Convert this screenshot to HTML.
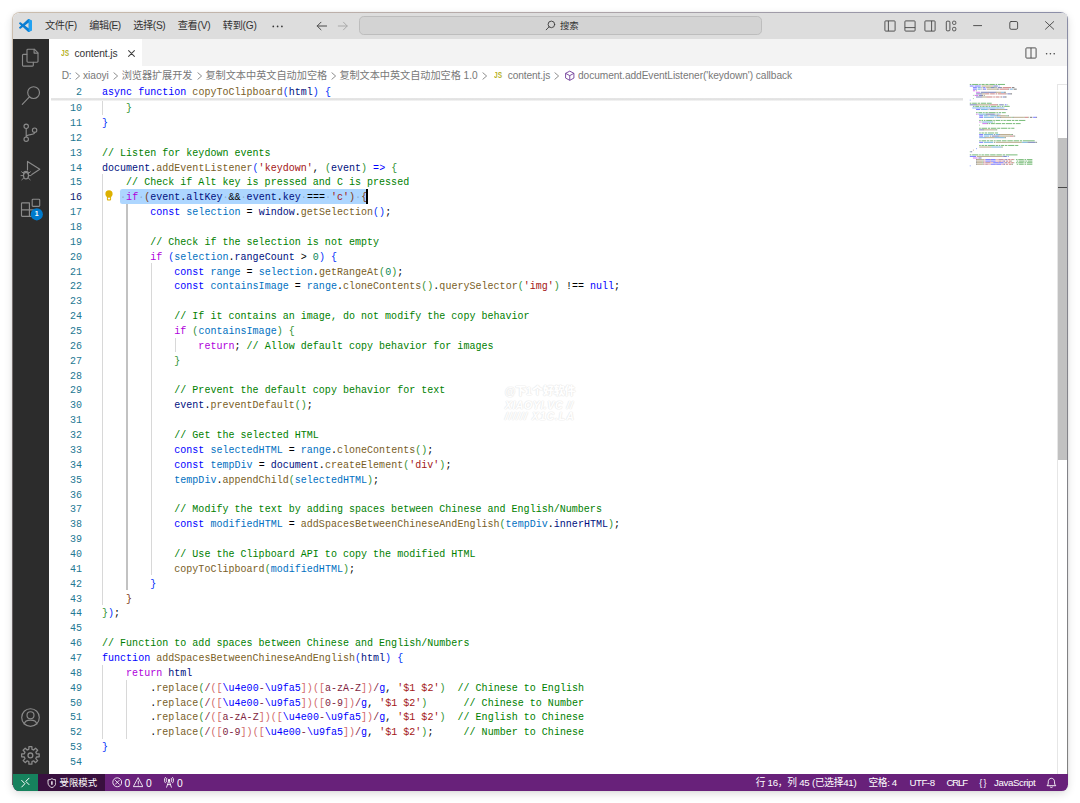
<!DOCTYPE html><html lang="zh-CN"><head><meta charset="utf-8"><title>content.js - Visual Studio Code</title>
<style>

html,body{margin:0;padding:0;background:#fff;}
body{width:1080px;height:803px;overflow:hidden;position:relative;font-family:"Liberation Sans","Noto Sans CJK SC",sans-serif;}
.win{position:absolute;left:12.8px;top:13px;width:1055.3px;height:777.9px;border-radius:6.4px;overflow:hidden;background:#fff;}
.shadow{position:absolute;left:11.6px;top:11.5px;width:1056.8px;height:779.4px;border-radius:7.6px;background:linear-gradient(90deg,#cbbdad 0%,#b5a9a8 45%,#8b8ea8 100%);box-shadow:0 3px 9px rgba(0,0,0,.13),0 0 3px rgba(0,0,0,.08);}
.pg{position:absolute;left:-12.8px;top:-13px;width:1080px;height:803px;}
.pg div,.pg span,.pg svg{position:absolute;}
.t{white-space:pre;}
.t span{position:static !important;}
.code,.ln{transform:rotate(.001deg);}
.code{font-family:"Liberation Mono","DejaVu Sans Mono",monospace;font-size:10px;letter-spacing:0.022px;white-space:pre;color:#000;height:14.864px;line-height:14.864px;}
.code span{position:static !important;}
.ln{font-family:"Liberation Mono","DejaVu Sans Mono",monospace;font-size:10px;letter-spacing:0.022px;color:#237893;text-align:right;width:40px;height:14.864px;line-height:14.864px;}
.g{width:.9px;background:#d8d8d8;}
.ga{width:1.7px;background:#c2c2c2;}
.ws{color:rgba(51,51,51,.28);}

</style></head><body>
<div class="shadow"></div>
<div style="position:absolute;left:11.6px;top:40px;width:1.4px;height:745px;background:linear-gradient(#cbbdad 0,#c5b7a8 10%,#77706f 30%,#5e585c 100%)"></div>
<div class="win"><div class="pg">
<div style="left:12px;top:12px;width:1057px;height:26.9px;background:#dddddd"></div>
<svg style="left:19.2px;top:18.9px" width="13" height="13" viewBox="0 0 100 100"><path fill="#0b7ed3" fill-rule="evenodd" d="M70.9119 99.3171C72.4869 99.9307 74.2828 99.8914 75.8725 99.1264L96.4608 89.2197C98.6242 88.1787 100 85.9892 100 83.5872V16.4133C100 14.0113 98.6243 11.8218 96.4609 10.7808L75.8725 0.873756C73.7862 -0.130129 71.3446 0.11576 69.5135 1.44695C69.252 1.63711 69.0028 1.84943 68.769 2.08341L29.3551 38.0415L12.1872 25.0096C10.589 23.7965 8.35363 23.8959 6.86933 25.2461L1.36303 30.2549C-0.452552 31.9064 -0.454633 34.7627 1.35853 36.417L16.2471 50.0001L1.35853 63.5832C-0.454633 65.2374 -0.452552 68.0938 1.36303 69.7453L6.86933 74.7541C8.35363 76.1043 10.589 76.2037 12.1872 74.9905L29.3551 61.9587L68.769 97.9167C69.3925 98.5406 70.1246 99.0104 70.9119 99.3171ZM75.0152 27.2989L45.1091 50.0001L75.0152 72.7012V27.2989Z"/><path fill="#22a2f2" d="M75 .6L96.46 10.78C98.62 11.82 100 14 100 16.41V83.59C100 85.99 98.62 88.18 96.46 89.22L75 99.4C73.4 100.1 71.6 99.7 70.9 99.3C73.4 100 75 98 75 95.6V4.4C75 2 73.4 0 70.9 .7C71.6 .3 73.4 -.1 75 .6Z"/></svg>
<span class="t" id="m1" style="left:45.00px;top:18.20px;height:16px;line-height:16px;font-size:10.17px;color:#333333;letter-spacing:-0.316px;">文件(F)</span>
<span class="t" id="m2" style="left:89.30px;top:18.20px;height:16px;line-height:16px;font-size:10.17px;color:#333333;letter-spacing:-0.492px;">编辑(E)</span>
<span class="t" id="m3" style="left:133.30px;top:18.20px;height:16px;line-height:16px;font-size:10.17px;color:#333333;letter-spacing:-0.372px;">选择(S)</span>
<span class="t" id="m4" style="left:177.70px;top:18.20px;height:16px;line-height:16px;font-size:10.17px;color:#333333;letter-spacing:-0.252px;">查看(V)</span>
<span class="t" id="m5" style="left:222.70px;top:18.20px;height:16px;line-height:16px;font-size:10.17px;color:#333333;letter-spacing:-0.197px;">转到(G)</span>
<svg style="left:272.4px;top:24.6px" width="12" height="3" viewBox="0 0 12 3" fill="#333"><circle cx="1.3" cy="1.4" r=".85"/><circle cx="5.6" cy="1.4" r=".85"/><circle cx="9.9" cy="1.4" r=".85"/></svg>
<svg style="left:316px;top:20px" width="34" height="12" viewBox="0 0 34 12" fill="none" stroke-linecap="round" stroke-linejoin="round"><path d="M10.6 6H1.2M5 2.2L1.2 6L5 9.8" stroke="#4a4a4a" stroke-width="1"/><path d="M22.3 6H31.2M27.5 2.2L31.2 6L27.5 9.8" stroke="#a9a9a9" stroke-width="1"/></svg>
<div style="left:359.1px;top:16.2px;width:400.9px;height:16.8px;border-radius:4.7px;background:#d3d3d3;border:.8px solid #bdbdbd;box-sizing:content-box"></div>
<svg style="left:545.4px;top:20.4px" width="11" height="11" viewBox="0 0 11 11" fill="none" stroke="#3b3b3b" stroke-width=".9" stroke-linecap="round"><circle cx="6.4" cy="4.4" r="3.3"/><path d="M4.1 6.8L1.2 9.8"/></svg>
<span class="t" id="cc" style="left:560.00px;top:17.90px;height:16px;line-height:16px;font-size:9.40px;color:#333;letter-spacing:-0.183px;">搜索</span>
<svg style="left:883.5px;top:19.5px" width="74" height="12" viewBox="0 0 74 12" fill="none" stroke="#454545" stroke-width=".9"><rect x=".9" y=".9" width="10.2" height="10.2" rx=".8"/><path d="M4.4 .9V11.1"/><rect x="20.9" y=".9" width="10.2" height="10.2" rx=".8"/><path d="M20.9 7.6H31.1"/><rect x="40.9" y=".9" width="10.2" height="10.2" rx=".8"/><path d="M47.6 .9V11.1"/><rect x="62.3" y="1.2" width="3.6" height="9.6" rx=".9"/><rect x="68.6" y="1.2" width="3.2" height="3.2" rx="1"/><rect x="68.6" y="7.4" width="3.2" height="3.4" rx="1"/></svg>
<svg style="left:970px;top:18px" width="90" height="16" viewBox="0 0 90 16" fill="none" stroke="#3a3a3a" stroke-width=".85" stroke-linecap="round"><path d="M3.6 7.6H11.6"/><rect x="39.8" y="3.5" width="7.8" height="7.8" rx="1.4"/><path d="M75.5 3.6L83.7 11.2M83.7 3.6L75.5 11.2"/></svg>
<div style="left:12px;top:38.9px;width:37.3px;height:735px;background:#2c2c2c"></div>
<svg style="left:0;top:0" width="60" height="803" viewBox="0 0 60 803" fill="none" stroke="#8a8a8a" stroke-width="1.15" stroke-linejoin="round" stroke-linecap="round"><path d="M27.9 49.2H34.3L38 52.9V61.3A.9 .9 0 0 1 37.1 62.2H27.9A.9 .9 0 0 1 27 61.3V50.1A.9 .9 0 0 1 27.9 49.2Z"/><path d="M34.1 49.4V53.1H37.8"/><path d="M26.8 54.3H23.4A.9 .9 0 0 0 22.5 55.2V65.2A.9 .9 0 0 0 23.4 66.1H32.4A.9 .9 0 0 0 33.3 65.2V62.4"/><circle cx="33.6" cy="92.6" r="5.9"/><path d="M29.4 96.9L22.3 104.4"/><circle cx="26.2" cy="126.3" r="2.2"/><circle cx="26.2" cy="139.2" r="2.2"/><circle cx="34.6" cy="130.2" r="2.2"/><path d="M26.2 128.5V137M34.6 132.4C34.6 135.6 26.2 133.6 26.2 137"/><path d="M27.5 170V161.4L39.8 169.2L31.8 174.6"/><ellipse cx="26" cy="175.6" rx="2.5" ry="3.3"/><path d="M23.6 172.6C24 171 28 171 28.4 172.6" /><path d="M23.5 175.6H21M28.5 175.6H31M23.8 173.6L21.6 171.8M28.2 173.6L30.4 171.8M23.9 177.8L21.8 179.8M28.1 177.8L30.2 179.8" stroke-width="1"/><path d="M29.4 202.8H22.2A.7 .7 0 0 0 21.5 203.5V215.6A.7 .7 0 0 0 22.2 216.3H35.5A.7 .7 0 0 0 36.2 215.6V209.8H29.4ZM21.5 209.8H29.4V216.3"/><rect x="32.2" y="199.2" width="7.5" height="7.2" rx=".8"/><circle cx="36.8" cy="214.3" r="6.1" fill="#007acc" stroke="none"/><circle cx="30.5" cy="717.5" r="8.8"/><circle cx="30.5" cy="715.2" r="3.5"/><path d="M24.2 724C25.2 718.8 35.8 718.8 36.8 724"/><path d="M28.82 749.30 L28.93 746.62 L31.87 746.62 L31.98 749.30 L33.60 749.97 L35.57 748.15 L37.65 750.23 L35.83 752.20 L36.50 753.82 L39.18 753.93 L39.18 756.87 L36.50 756.98 L35.83 758.60 L37.65 760.57 L35.57 762.65 L33.60 760.83 L31.98 761.50 L31.87 764.18 L28.93 764.18 L28.82 761.50 L27.20 760.83 L25.23 762.65 L23.15 760.57 L24.97 758.60 L24.30 756.98 L21.62 756.87 L21.62 753.93 L24.30 753.82 L24.97 752.20 L23.15 750.23 L25.23 748.15 L27.20 749.97Z" stroke-width="1.3"/><circle cx="30.4" cy="755.4" r="2.4" stroke-width="1.3"/></svg><span class="t" style="left:34.6px;top:209.4px;width:4.4px;text-align:center;font-size:7px;line-height:10px;height:10px;font-weight:bold;color:#fff">1</span>
<div style="left:49.3px;top:38.9px;width:1019.7px;height:27.5px;background:#f3f3f3"></div>
<div style="left:49.3px;top:38.9px;width:92.7px;height:27.5px;background:#ffffff"></div>
<span class="t" style="left:60.90px;top:46.60px;height:12px;line-height:12px;font-size:8.6px;font-weight:bold;color:#b7b227;transform:scaleX(.76);transform-origin:0 50%">JS</span>
<span class="t" id="tabn" style="left:74.60px;top:46.40px;height:16px;line-height:16px;font-size:10.17px;color:#333333;letter-spacing:-0.048px;">content.js</span>
<svg style="left:126.7px;top:49.1px" width="9" height="9" viewBox="0 0 9 9" fill="none" stroke="#424242" stroke-width="1.05" stroke-linecap="round"><path d="M1.6 1.6L7.4 7.4M7.4 1.6L1.6 7.4"/></svg>
<svg style="left:1024.6px;top:47px" width="12" height="12" viewBox="0 0 12 12" fill="none" stroke="#424242" stroke-width=".9"><rect x=".9" y=".9" width="10.2" height="10.2" rx=".8"/><path d="M6 .9V11.1"/></svg>
<svg style="left:1045px;top:51.5px" width="12" height="4" viewBox="0 0 12 4" fill="#424242"><circle cx="1.6" cy="1.8" r=".8"/><circle cx="5.4" cy="1.8" r=".8"/><circle cx="9.2" cy="1.8" r=".8"/></svg>
<span class="t" id="b1" style="left:61.70px;top:68.00px;height:16px;line-height:16px;font-size:10.17px;color:#787878;letter-spacing:-0.278px;">D:</span>
<svg style="left:75.4px;top:71.5px" width="6" height="8" viewBox="0 0 6 8" fill="none" stroke="#7a7a7a" stroke-width=".85" stroke-linecap="round" stroke-linejoin="round"><path d="M.9 .8L4.6 4L.9 7.2"/></svg>
<span class="t" id="b2" style="left:83.10px;top:68.00px;height:16px;line-height:16px;font-size:10.17px;color:#787878;letter-spacing:-0.061px;">xiaoyi</span>
<svg style="left:112.6px;top:71.5px" width="6" height="8" viewBox="0 0 6 8" fill="none" stroke="#7a7a7a" stroke-width=".85" stroke-linecap="round" stroke-linejoin="round"><path d="M.9 .8L4.6 4L.9 7.2"/></svg>
<span class="t" id="b3" style="left:121.70px;top:68.00px;height:16px;line-height:16px;font-size:10.17px;color:#787878;letter-spacing:-0.056px;">浏览器扩展开发</span>
<svg style="left:196.8px;top:71.5px" width="6" height="8" viewBox="0 0 6 8" fill="none" stroke="#7a7a7a" stroke-width=".85" stroke-linecap="round" stroke-linejoin="round"><path d="M.9 .8L4.6 4L.9 7.2"/></svg>
<span class="t" id="b4" style="left:205.40px;top:68.00px;height:16px;line-height:16px;font-size:10.17px;color:#787878;letter-spacing:-0.006px;">复制文本中英文自动加空格</span>
<svg style="left:331.0px;top:71.5px" width="6" height="8" viewBox="0 0 6 8" fill="none" stroke="#7a7a7a" stroke-width=".85" stroke-linecap="round" stroke-linejoin="round"><path d="M.9 .8L4.6 4L.9 7.2"/></svg>
<span class="t" id="b5" style="left:339.40px;top:68.00px;height:16px;line-height:16px;font-size:10.17px;color:#787878;letter-spacing:-0.039px;">复制文本中英文自动加空格 1.0</span>
<svg style="left:481.6px;top:71.5px" width="6" height="8" viewBox="0 0 6 8" fill="none" stroke="#7a7a7a" stroke-width=".85" stroke-linecap="round" stroke-linejoin="round"><path d="M.9 .8L4.6 4L.9 7.2"/></svg>
<span class="t" style="left:494.00px;top:68.80px;height:12px;line-height:12px;font-size:8.6px;font-weight:bold;color:#b7b227;transform:scaleX(.76);transform-origin:0 50%">JS</span>
<span class="t" id="b6" style="left:507.70px;top:68.00px;height:16px;line-height:16px;font-size:10.17px;color:#787878;letter-spacing:-0.098px;">content.js</span>
<svg style="left:554.2px;top:71.5px" width="6" height="8" viewBox="0 0 6 8" fill="none" stroke="#7a7a7a" stroke-width=".85" stroke-linecap="round" stroke-linejoin="round"><path d="M.9 .8L4.6 4L.9 7.2"/></svg>
<svg style="left:563.6px;top:70.1px" width="11.5" height="11.5" viewBox="0 0 16 16" fill="none" stroke="#652d90" stroke-width="1.15" stroke-linejoin="round"><path d="M8 1.6L13.8 4.6V11.2L8 14.4L2.2 11.2V4.6Z"/><path d="M2.4 4.8L8 7.8L13.6 4.8M8 7.8V14.2"/></svg>
<span class="t" id="b7" style="left:578.00px;top:68.00px;height:16px;line-height:16px;font-size:10.17px;color:#787878;letter-spacing:-0.060px;">document.addEventListener('keydown') callback</span>
<div style="left:120.47px;top:189.00px;width:246.90px;height:14.86px;background:#add6ff;border-radius:2.3px"></div>
<div class="g" style="left:102.40px;top:99.81px;height:14.86px"></div>
<div class="g" style="left:102.40px;top:174.13px;height:431.06px"></div>
<div class="ga" style="left:126.19px;top:203.86px;height:386.46px"></div>
<div class="g" style="left:150.58px;top:263.32px;height:312.14px"></div>
<div class="g" style="left:174.66px;top:337.64px;height:14.86px"></div>
<div class="g" style="left:102.40px;top:664.65px;height:74.32px"></div>
<div class="g" style="left:126.49px;top:679.51px;height:59.46px"></div>
<div class="ln" style="left:42.20px;top:86.30px;color:#237893">2</div>
<div class="code" style="left:102.40px;top:86.30px"><span style="color:#0000ff">async</span> <span style="color:#0000ff">function</span> <span style="color:#795e26">copyToClipboard</span><span style="color:#0431fa">(</span><span style="color:#001080">html</span><span style="color:#0431fa">)</span> <span style="color:#0431fa">{</span></div>
<div class="ln" style="left:42.20px;top:102.06px;color:#237893">10</div>
<div class="code" style="left:102.40px;top:102.06px">    <span style="color:#319331">}</span></div>
<div class="ln" style="left:42.20px;top:116.93px;color:#237893">11</div>
<div class="code" style="left:102.40px;top:116.93px"><span style="color:#0431fa">}</span></div>
<div class="ln" style="left:42.20px;top:131.79px;color:#237893">12</div>
<div class="ln" style="left:42.20px;top:146.66px;color:#237893">13</div>
<div class="code" style="left:102.40px;top:146.66px"><span style="color:#008000">// Listen for keydown events</span></div>
<div class="ln" style="left:42.20px;top:161.52px;color:#237893">14</div>
<div class="code" style="left:102.40px;top:161.52px"><span style="color:#001080">document</span>.<span style="color:#795e26">addEventListener</span><span style="color:#0431fa">(</span><span style="color:#a31515">'keydown'</span>, <span style="color:#319331">(</span><span style="color:#001080">event</span><span style="color:#319331">)</span> <span style="color:#0000ff">=&gt;</span> <span style="color:#319331">{</span></div>
<div class="ln" style="left:42.20px;top:176.38px;color:#237893">15</div>
<div class="code" style="left:102.40px;top:176.38px">    <span style="color:#008000">// Check if Alt key is pressed and C is pressed</span></div>
<div class="ln" style="left:42.20px;top:191.25px;color:#0b216f">16</div>
<div class="code" style="left:102.40px;top:191.25px">   <span class="ws">·</span><span style="color:#af00db">if</span><span class="ws">·</span><span style="color:#7b3814">(</span><span style="color:#001080">event</span>.<span style="color:#001080">altKey</span><span class="ws">·</span>&amp;&amp;<span class="ws">·</span><span style="color:#001080">event</span>.<span style="color:#001080">key</span><span class="ws">·</span>===<span class="ws">·</span><span style="color:#a31515">'c'</span><span style="color:#7b3814">)</span><span class="ws">·</span><span style="color:#7b3814">{</span></div>
<div class="ln" style="left:42.20px;top:206.11px;color:#237893">17</div>
<div class="code" style="left:102.40px;top:206.11px">        <span style="color:#0000ff">const</span> <span style="color:#0070c1">selection</span> = <span style="color:#001080">window</span>.<span style="color:#795e26">getSelection</span><span style="color:#0431fa">()</span>;</div>
<div class="ln" style="left:42.20px;top:220.98px;color:#237893">18</div>
<div class="ln" style="left:42.20px;top:235.84px;color:#237893">19</div>
<div class="code" style="left:102.40px;top:235.84px">        <span style="color:#008000">// Check if the selection is not empty</span></div>
<div class="ln" style="left:42.20px;top:250.70px;color:#237893">20</div>
<div class="code" style="left:102.40px;top:250.70px">        <span style="color:#af00db">if</span> <span style="color:#0431fa">(</span><span style="color:#0070c1">selection</span>.<span style="color:#001080">rangeCount</span> &gt; <span style="color:#098658">0</span><span style="color:#0431fa">)</span> <span style="color:#0431fa">{</span></div>
<div class="ln" style="left:42.20px;top:265.57px;color:#237893">21</div>
<div class="code" style="left:102.40px;top:265.57px">            <span style="color:#0000ff">const</span> <span style="color:#0070c1">range</span> = <span style="color:#0070c1">selection</span>.<span style="color:#795e26">getRangeAt</span><span style="color:#319331">(</span><span style="color:#098658">0</span><span style="color:#319331">)</span>;</div>
<div class="ln" style="left:42.20px;top:280.43px;color:#237893">22</div>
<div class="code" style="left:102.40px;top:280.43px">            <span style="color:#0000ff">const</span> <span style="color:#0070c1">containsImage</span> = <span style="color:#0070c1">range</span>.<span style="color:#795e26">cloneContents</span><span style="color:#319331">()</span>.<span style="color:#795e26">querySelector</span><span style="color:#319331">(</span><span style="color:#a31515">'img'</span><span style="color:#319331">)</span> !== <span style="color:#0000ff">null</span>;</div>
<div class="ln" style="left:42.20px;top:295.30px;color:#237893">23</div>
<div class="ln" style="left:42.20px;top:310.16px;color:#237893">24</div>
<div class="code" style="left:102.40px;top:310.16px">            <span style="color:#008000">// If it contains an image, do not modify the copy behavior</span></div>
<div class="ln" style="left:42.20px;top:325.02px;color:#237893">25</div>
<div class="code" style="left:102.40px;top:325.02px">            <span style="color:#af00db">if</span> <span style="color:#319331">(</span><span style="color:#0070c1">containsImage</span><span style="color:#319331">)</span> <span style="color:#319331">{</span></div>
<div class="ln" style="left:42.20px;top:339.89px;color:#237893">26</div>
<div class="code" style="left:102.40px;top:339.89px">                <span style="color:#af00db">return</span>; <span style="color:#008000">// Allow default copy behavior for images</span></div>
<div class="ln" style="left:42.20px;top:354.75px;color:#237893">27</div>
<div class="code" style="left:102.40px;top:354.75px">            <span style="color:#319331">}</span></div>
<div class="ln" style="left:42.20px;top:369.62px;color:#237893">28</div>
<div class="ln" style="left:42.20px;top:384.48px;color:#237893">29</div>
<div class="code" style="left:102.40px;top:384.48px">            <span style="color:#008000">// Prevent the default copy behavior for text</span></div>
<div class="ln" style="left:42.20px;top:399.34px;color:#237893">30</div>
<div class="code" style="left:102.40px;top:399.34px">            <span style="color:#001080">event</span>.<span style="color:#795e26">preventDefault</span><span style="color:#319331">()</span>;</div>
<div class="ln" style="left:42.20px;top:414.21px;color:#237893">31</div>
<div class="ln" style="left:42.20px;top:429.07px;color:#237893">32</div>
<div class="code" style="left:102.40px;top:429.07px">            <span style="color:#008000">// Get the selected HTML</span></div>
<div class="ln" style="left:42.20px;top:443.94px;color:#237893">33</div>
<div class="code" style="left:102.40px;top:443.94px">            <span style="color:#0000ff">const</span> <span style="color:#0070c1">selectedHTML</span> = <span style="color:#0070c1">range</span>.<span style="color:#795e26">cloneContents</span><span style="color:#319331">()</span>;</div>
<div class="ln" style="left:42.20px;top:458.80px;color:#237893">34</div>
<div class="code" style="left:102.40px;top:458.80px">            <span style="color:#0000ff">const</span> <span style="color:#0070c1">tempDiv</span> = <span style="color:#001080">document</span>.<span style="color:#795e26">createElement</span><span style="color:#319331">(</span><span style="color:#a31515">'div'</span><span style="color:#319331">)</span>;</div>
<div class="ln" style="left:42.20px;top:473.66px;color:#237893">35</div>
<div class="code" style="left:102.40px;top:473.66px">            <span style="color:#0070c1">tempDiv</span>.<span style="color:#795e26">appendChild</span><span style="color:#319331">(</span><span style="color:#0070c1">selectedHTML</span><span style="color:#319331">)</span>;</div>
<div class="ln" style="left:42.20px;top:488.53px;color:#237893">36</div>
<div class="ln" style="left:42.20px;top:503.39px;color:#237893">37</div>
<div class="code" style="left:102.40px;top:503.39px">            <span style="color:#008000">// Modify the text by adding spaces between Chinese and English/Numbers</span></div>
<div class="ln" style="left:42.20px;top:518.26px;color:#237893">38</div>
<div class="code" style="left:102.40px;top:518.26px">            <span style="color:#0000ff">const</span> <span style="color:#0070c1">modifiedHTML</span> = <span style="color:#795e26">addSpacesBetweenChineseAndEnglish</span><span style="color:#319331">(</span><span style="color:#0070c1">tempDiv</span>.<span style="color:#001080">innerHTML</span><span style="color:#319331">)</span>;</div>
<div class="ln" style="left:42.20px;top:533.12px;color:#237893">39</div>
<div class="ln" style="left:42.20px;top:547.98px;color:#237893">40</div>
<div class="code" style="left:102.40px;top:547.98px">            <span style="color:#008000">// Use the Clipboard API to copy the modified HTML</span></div>
<div class="ln" style="left:42.20px;top:562.85px;color:#237893">41</div>
<div class="code" style="left:102.40px;top:562.85px">            <span style="color:#795e26">copyToClipboard</span><span style="color:#319331">(</span><span style="color:#0070c1">modifiedHTML</span><span style="color:#319331">)</span>;</div>
<div class="ln" style="left:42.20px;top:577.71px;color:#237893">42</div>
<div class="code" style="left:102.40px;top:577.71px">        <span style="color:#0431fa">}</span></div>
<div class="ln" style="left:42.20px;top:592.58px;color:#237893">43</div>
<div class="code" style="left:102.40px;top:592.58px">    <span style="color:#7b3814">}</span></div>
<div class="ln" style="left:42.20px;top:607.44px;color:#237893">44</div>
<div class="code" style="left:102.40px;top:607.44px"><span style="color:#319331">}</span><span style="color:#0431fa">)</span>;</div>
<div class="ln" style="left:42.20px;top:622.30px;color:#237893">45</div>
<div class="ln" style="left:42.20px;top:637.17px;color:#237893">46</div>
<div class="code" style="left:102.40px;top:637.17px"><span style="color:#008000">// Function to add spaces between Chinese and English/Numbers</span></div>
<div class="ln" style="left:42.20px;top:652.03px;color:#237893">47</div>
<div class="code" style="left:102.40px;top:652.03px"><span style="color:#0000ff">function</span> <span style="color:#795e26">addSpacesBetweenChineseAndEnglish</span><span style="color:#0431fa">(</span><span style="color:#001080">html</span><span style="color:#0431fa">)</span> <span style="color:#0431fa">{</span></div>
<div class="ln" style="left:42.20px;top:666.90px;color:#237893">48</div>
<div class="code" style="left:102.40px;top:666.90px">    <span style="color:#af00db">return</span> <span style="color:#001080">html</span></div>
<div class="ln" style="left:42.20px;top:681.76px;color:#237893">49</div>
<div class="code" style="left:102.40px;top:681.76px">        .<span style="color:#795e26">replace</span><span style="color:#319331">(</span><span style="color:#811f3f">/</span><span style="color:#d16969">(</span><span style="color:#d16969">[</span><span style="color:#0000ff">\u4e00</span><span style="color:#811f3f">-</span><span style="color:#0000ff">\u9fa5</span><span style="color:#d16969">]</span><span style="color:#d16969">)</span><span style="color:#d16969">(</span><span style="color:#d16969">[</span><span style="color:#811f3f">a-zA-Z</span><span style="color:#d16969">]</span><span style="color:#d16969">)</span><span style="color:#811f3f">/</span><span style="color:#0000ff">g</span>, <span style="color:#a31515">'$1 $2'</span><span style="color:#319331">)</span>  <span style="color:#008000">// Chinese to English</span></div>
<div class="ln" style="left:42.20px;top:696.62px;color:#237893">50</div>
<div class="code" style="left:102.40px;top:696.62px">        .<span style="color:#795e26">replace</span><span style="color:#319331">(</span><span style="color:#811f3f">/</span><span style="color:#d16969">(</span><span style="color:#d16969">[</span><span style="color:#0000ff">\u4e00</span><span style="color:#811f3f">-</span><span style="color:#0000ff">\u9fa5</span><span style="color:#d16969">]</span><span style="color:#d16969">)</span><span style="color:#d16969">(</span><span style="color:#d16969">[</span><span style="color:#811f3f">0-9</span><span style="color:#d16969">]</span><span style="color:#d16969">)</span><span style="color:#811f3f">/</span><span style="color:#0000ff">g</span>, <span style="color:#a31515">'$1 $2'</span><span style="color:#319331">)</span>      <span style="color:#008000">// Chinese to Number</span></div>
<div class="ln" style="left:42.20px;top:711.49px;color:#237893">51</div>
<div class="code" style="left:102.40px;top:711.49px">        .<span style="color:#795e26">replace</span><span style="color:#319331">(</span><span style="color:#811f3f">/</span><span style="color:#d16969">(</span><span style="color:#d16969">[</span><span style="color:#811f3f">a-zA-Z</span><span style="color:#d16969">]</span><span style="color:#d16969">)</span><span style="color:#d16969">(</span><span style="color:#d16969">[</span><span style="color:#0000ff">\u4e00</span><span style="color:#811f3f">-</span><span style="color:#0000ff">\u9fa5</span><span style="color:#d16969">]</span><span style="color:#d16969">)</span><span style="color:#811f3f">/</span><span style="color:#0000ff">g</span>, <span style="color:#a31515">'$1 $2'</span><span style="color:#319331">)</span>  <span style="color:#008000">// English to Chinese</span></div>
<div class="ln" style="left:42.20px;top:726.35px;color:#237893">52</div>
<div class="code" style="left:102.40px;top:726.35px">        .<span style="color:#795e26">replace</span><span style="color:#319331">(</span><span style="color:#811f3f">/</span><span style="color:#d16969">(</span><span style="color:#d16969">[</span><span style="color:#811f3f">0-9</span><span style="color:#d16969">]</span><span style="color:#d16969">)</span><span style="color:#d16969">(</span><span style="color:#d16969">[</span><span style="color:#0000ff">\u4e00</span><span style="color:#811f3f">-</span><span style="color:#0000ff">\u9fa5</span><span style="color:#d16969">]</span><span style="color:#d16969">)</span><span style="color:#811f3f">/</span><span style="color:#0000ff">g</span>, <span style="color:#a31515">'$1 $2'</span><span style="color:#319331">)</span>;     <span style="color:#008000">// Number to Chinese</span></div>
<div class="ln" style="left:42.20px;top:741.22px;color:#237893">53</div>
<div class="code" style="left:102.40px;top:741.22px"><span style="color:#0431fa">}</span></div>
<div class="ln" style="left:42.20px;top:756.08px;color:#237893">54</div>
<div style="left:366.37px;top:189.00px;width:1.8px;height:14.86px;background:#000"></div>
<svg style="left:104.6px;top:190.10px" width="8" height="11" viewBox="0 0 8 11"><path d="M4 .3A3.6 3.6 0 0 0 .4 3.9C.4 5.3 1.2 6.2 1.9 6.9V9.6C1.9 10.1 2.3 10.5 2.8 10.5H5.2C5.7 10.5 6.1 10.1 6.1 9.6V6.9C6.8 6.2 7.6 5.3 7.6 3.9A3.6 3.6 0 0 0 4 .3Z" fill="#ddb100"/><rect x="2.9" y="7.7" width="2.2" height="1.7" fill="#fff"/></svg>
<div style="left:50.6px;top:98.21px;width:912.6px;height:2.4px;background:linear-gradient(#ececec,#dddddd 35%,#e6e6e6 60%,#f8f8f8)"></div>
<span class="t" id="w1" style="left:504.80px;top:383.00px;height:16px;line-height:16px;font-size:10.90px;color:#fff;letter-spacing:-0.092px;font-weight:900;text-shadow:0 0 1.4px #e6e6e6,0 0 1.4px #e6e6e6,0 0 1px #ebebeb;">@下1个好软件</span>
<span class="t" id="w2" style="left:504.80px;top:396.70px;height:16px;line-height:16px;font-size:10.60px;color:#fff;letter-spacing:0.524px;font-weight:bold;text-shadow:0 0 1.4px #e6e6e6,0 0 1.4px #e6e6e6,0 0 1px #ebebeb;font-style:italic;">XIAOYI.VC //</span>
<span class="t" id="w3" style="left:504.80px;top:407.80px;height:16px;line-height:16px;font-size:10.60px;color:#fff;letter-spacing:0.901px;font-weight:bold;text-shadow:0 0 1.4px #e6e6e6,0 0 1.4px #e6e6e6,0 0 1px #ebebeb;font-style:italic;">////// X1C.LA</span>
<svg style="left:0;top:0" width="1080" height="803" viewBox="0 0 1080 803" shape-rendering="auto"><rect x="969.80" y="83.95" width="1.56" height="1.05" fill="#008000" opacity=".5"/><rect x="972.15" y="83.95" width="6.26" height="1.05" fill="#008000" opacity=".5"/><rect x="979.18" y="83.95" width="1.56" height="1.05" fill="#008000" opacity=".5"/><rect x="981.53" y="83.95" width="3.13" height="1.05" fill="#008000" opacity=".5"/><rect x="985.44" y="83.95" width="3.13" height="1.05" fill="#008000" opacity=".5"/><rect x="989.35" y="83.95" width="5.47" height="1.05" fill="#008000" opacity=".5"/><rect x="995.61" y="83.95" width="1.56" height="1.05" fill="#008000" opacity=".5"/><rect x="997.95" y="83.95" width="7.04" height="1.05" fill="#008000" opacity=".5"/><rect x="969.80" y="85.51" width="3.91" height="1.05" fill="#0000ff" opacity=".5"/><rect x="974.49" y="85.51" width="6.26" height="1.05" fill="#0000ff" opacity=".5"/><rect x="981.53" y="85.51" width="11.73" height="1.05" fill="#795e26" opacity=".5"/><rect x="993.26" y="85.51" width="0.78" height="1.05" fill="#0431fa" opacity=".5"/><rect x="994.04" y="85.51" width="3.13" height="1.05" fill="#001080" opacity=".5"/><rect x="997.17" y="85.51" width="0.78" height="1.05" fill="#0431fa" opacity=".5"/><rect x="998.73" y="85.51" width="0.78" height="1.05" fill="#0431fa" opacity=".5"/><rect x="972.93" y="87.08" width="3.91" height="1.05" fill="#0000ff" opacity=".5"/><rect x="977.62" y="87.08" width="3.13" height="1.05" fill="#0070c1" opacity=".5"/><rect x="981.53" y="87.08" width="0.78" height="1.05" fill="#000" opacity=".5"/><rect x="983.09" y="87.08" width="2.35" height="1.05" fill="#0000ff" opacity=".5"/><rect x="986.22" y="87.08" width="3.13" height="1.05" fill="#795e26" opacity=".5"/><rect x="989.35" y="87.08" width="1.56" height="1.05" fill="#319331" opacity=".5"/><rect x="990.91" y="87.08" width="3.13" height="1.05" fill="#001080" opacity=".5"/><rect x="994.04" y="87.08" width="0.78" height="1.05" fill="#319331" opacity=".5"/><rect x="994.82" y="87.08" width="0.78" height="1.05" fill="#000" opacity=".5"/><rect x="996.39" y="87.08" width="0.78" height="1.05" fill="#000" opacity=".5"/><rect x="997.95" y="87.08" width="3.13" height="1.05" fill="#001080" opacity=".5"/><rect x="1001.08" y="87.08" width="0.78" height="1.05" fill="#000" opacity=".5"/><rect x="1002.64" y="87.08" width="8.60" height="1.05" fill="#a31515" opacity=".5"/><rect x="1012.03" y="87.08" width="2.35" height="1.05" fill="#000" opacity=".5"/><rect x="972.93" y="88.64" width="3.91" height="1.05" fill="#0000ff" opacity=".5"/><rect x="977.62" y="88.64" width="3.13" height="1.05" fill="#0070c1" opacity=".5"/><rect x="981.53" y="88.64" width="0.78" height="1.05" fill="#000" opacity=".5"/><rect x="983.09" y="88.64" width="0.78" height="1.05" fill="#000" opacity=".5"/><rect x="983.88" y="88.64" width="2.35" height="1.05" fill="#0000ff" opacity=".5"/><rect x="987.00" y="88.64" width="10.17" height="1.05" fill="#795e26" opacity=".5"/><rect x="997.17" y="88.64" width="1.56" height="1.05" fill="#000" opacity=".5"/><rect x="999.52" y="88.64" width="8.60" height="1.05" fill="#a31515" opacity=".5"/><rect x="1008.12" y="88.64" width="0.78" height="1.05" fill="#000" opacity=".5"/><rect x="1009.68" y="88.64" width="3.13" height="1.05" fill="#0070c1" opacity=".5"/><rect x="1013.59" y="88.64" width="3.13" height="1.05" fill="#000" opacity=".5"/><rect x="972.93" y="90.21" width="2.35" height="1.05" fill="#af00db" opacity=".5"/><rect x="976.06" y="90.21" width="0.78" height="1.05" fill="#319331" opacity=".5"/><rect x="976.06" y="91.77" width="3.91" height="1.05" fill="#af00db" opacity=".5"/><rect x="980.75" y="91.77" width="7.04" height="1.05" fill="#001080" opacity=".5"/><rect x="987.79" y="91.77" width="0.78" height="1.05" fill="#000" opacity=".5"/><rect x="988.57" y="91.77" width="7.04" height="1.05" fill="#001080" opacity=".5"/><rect x="995.61" y="91.77" width="0.78" height="1.05" fill="#000" opacity=".5"/><rect x="996.39" y="91.77" width="3.91" height="1.05" fill="#795e26" opacity=".5"/><rect x="1000.30" y="91.77" width="0.78" height="1.05" fill="#7b3814" opacity=".5"/><rect x="1001.08" y="91.77" width="3.13" height="1.05" fill="#0070c1" opacity=".5"/><rect x="1004.21" y="91.77" width="1.56" height="1.05" fill="#000" opacity=".5"/><rect x="976.06" y="93.34" width="5.47" height="1.05" fill="#001080" opacity=".5"/><rect x="981.53" y="93.34" width="0.78" height="1.05" fill="#000" opacity=".5"/><rect x="982.31" y="93.34" width="2.35" height="1.05" fill="#795e26" opacity=".5"/><rect x="984.66" y="93.34" width="0.78" height="1.05" fill="#7b3814" opacity=".5"/><rect x="985.44" y="93.34" width="3.91" height="1.05" fill="#a31515" opacity=".5"/><rect x="990.13" y="93.34" width="4.69" height="1.05" fill="#a31515" opacity=".5"/><rect x="995.61" y="93.34" width="1.56" height="1.05" fill="#a31515" opacity=".5"/><rect x="997.95" y="93.34" width="7.82" height="1.05" fill="#a31515" opacity=".5"/><rect x="1005.77" y="93.34" width="0.78" height="1.05" fill="#000" opacity=".5"/><rect x="1007.34" y="93.34" width="3.13" height="1.05" fill="#001080" opacity=".5"/><rect x="1010.46" y="93.34" width="1.56" height="1.05" fill="#000" opacity=".5"/><rect x="972.93" y="94.90" width="0.78" height="1.05" fill="#319331" opacity=".5"/><rect x="974.49" y="94.90" width="3.91" height="1.05" fill="#af00db" opacity=".5"/><rect x="979.18" y="94.90" width="0.78" height="1.05" fill="#000" opacity=".5"/><rect x="979.97" y="94.90" width="2.35" height="1.05" fill="#001080" opacity=".5"/><rect x="982.31" y="94.90" width="0.78" height="1.05" fill="#000" opacity=".5"/><rect x="983.88" y="94.90" width="0.78" height="1.05" fill="#000" opacity=".5"/><rect x="976.06" y="96.47" width="5.47" height="1.05" fill="#001080" opacity=".5"/><rect x="981.53" y="96.47" width="0.78" height="1.05" fill="#000" opacity=".5"/><rect x="982.31" y="96.47" width="3.91" height="1.05" fill="#795e26" opacity=".5"/><rect x="986.22" y="96.47" width="0.78" height="1.05" fill="#7b3814" opacity=".5"/><rect x="987.00" y="96.47" width="5.47" height="1.05" fill="#a31515" opacity=".5"/><rect x="993.26" y="96.47" width="1.56" height="1.05" fill="#a31515" opacity=".5"/><rect x="995.61" y="96.47" width="3.91" height="1.05" fill="#a31515" opacity=".5"/><rect x="1000.30" y="96.47" width="0.78" height="1.05" fill="#a31515" opacity=".5"/><rect x="1001.08" y="96.47" width="0.78" height="1.05" fill="#000" opacity=".5"/><rect x="1002.64" y="96.47" width="2.35" height="1.05" fill="#001080" opacity=".5"/><rect x="1004.99" y="96.47" width="1.56" height="1.05" fill="#000" opacity=".5"/><rect x="972.93" y="98.03" width="0.78" height="1.05" fill="#319331" opacity=".5"/><rect x="969.80" y="99.59" width="0.78" height="1.05" fill="#0431fa" opacity=".5"/><rect x="969.80" y="102.72" width="1.56" height="1.05" fill="#008000" opacity=".5"/><rect x="972.15" y="102.72" width="4.69" height="1.05" fill="#008000" opacity=".5"/><rect x="977.62" y="102.72" width="2.35" height="1.05" fill="#008000" opacity=".5"/><rect x="980.75" y="102.72" width="5.47" height="1.05" fill="#008000" opacity=".5"/><rect x="987.00" y="102.72" width="4.69" height="1.05" fill="#008000" opacity=".5"/><rect x="969.80" y="104.29" width="6.26" height="1.05" fill="#001080" opacity=".5"/><rect x="976.06" y="104.29" width="0.78" height="1.05" fill="#000" opacity=".5"/><rect x="976.84" y="104.29" width="12.51" height="1.05" fill="#795e26" opacity=".5"/><rect x="989.35" y="104.29" width="0.78" height="1.05" fill="#0431fa" opacity=".5"/><rect x="990.13" y="104.29" width="7.04" height="1.05" fill="#a31515" opacity=".5"/><rect x="997.17" y="104.29" width="0.78" height="1.05" fill="#000" opacity=".5"/><rect x="998.73" y="104.29" width="0.78" height="1.05" fill="#319331" opacity=".5"/><rect x="999.52" y="104.29" width="3.91" height="1.05" fill="#001080" opacity=".5"/><rect x="1003.43" y="104.29" width="0.78" height="1.05" fill="#319331" opacity=".5"/><rect x="1004.99" y="104.29" width="1.56" height="1.05" fill="#0000ff" opacity=".5"/><rect x="1007.34" y="104.29" width="0.78" height="1.05" fill="#319331" opacity=".5"/><rect x="972.93" y="105.85" width="1.56" height="1.05" fill="#008000" opacity=".5"/><rect x="975.27" y="105.85" width="3.91" height="1.05" fill="#008000" opacity=".5"/><rect x="979.97" y="105.85" width="1.56" height="1.05" fill="#008000" opacity=".5"/><rect x="982.31" y="105.85" width="2.35" height="1.05" fill="#008000" opacity=".5"/><rect x="985.44" y="105.85" width="2.35" height="1.05" fill="#008000" opacity=".5"/><rect x="988.57" y="105.85" width="1.56" height="1.05" fill="#008000" opacity=".5"/><rect x="990.91" y="105.85" width="5.47" height="1.05" fill="#008000" opacity=".5"/><rect x="997.17" y="105.85" width="2.35" height="1.05" fill="#008000" opacity=".5"/><rect x="1000.30" y="105.85" width="0.78" height="1.05" fill="#008000" opacity=".5"/><rect x="1001.86" y="105.85" width="1.56" height="1.05" fill="#008000" opacity=".5"/><rect x="1004.21" y="105.85" width="5.47" height="1.05" fill="#008000" opacity=".5"/><rect x="972.93" y="107.42" width="1.56" height="1.05" fill="#af00db" opacity=".5"/><rect x="975.27" y="107.42" width="0.78" height="1.05" fill="#7b3814" opacity=".5"/><rect x="976.06" y="107.42" width="3.91" height="1.05" fill="#001080" opacity=".5"/><rect x="979.97" y="107.42" width="0.78" height="1.05" fill="#000" opacity=".5"/><rect x="980.75" y="107.42" width="4.69" height="1.05" fill="#001080" opacity=".5"/><rect x="986.22" y="107.42" width="1.56" height="1.05" fill="#000" opacity=".5"/><rect x="988.57" y="107.42" width="3.91" height="1.05" fill="#001080" opacity=".5"/><rect x="992.48" y="107.42" width="0.78" height="1.05" fill="#000" opacity=".5"/><rect x="993.26" y="107.42" width="2.35" height="1.05" fill="#001080" opacity=".5"/><rect x="996.39" y="107.42" width="2.35" height="1.05" fill="#000" opacity=".5"/><rect x="999.52" y="107.42" width="2.35" height="1.05" fill="#a31515" opacity=".5"/><rect x="1001.86" y="107.42" width="0.78" height="1.05" fill="#7b3814" opacity=".5"/><rect x="1003.43" y="107.42" width="0.78" height="1.05" fill="#7b3814" opacity=".5"/><rect x="976.06" y="108.98" width="3.91" height="1.05" fill="#0000ff" opacity=".5"/><rect x="980.75" y="108.98" width="7.04" height="1.05" fill="#0070c1" opacity=".5"/><rect x="988.57" y="108.98" width="0.78" height="1.05" fill="#000" opacity=".5"/><rect x="990.13" y="108.98" width="4.69" height="1.05" fill="#001080" opacity=".5"/><rect x="994.82" y="108.98" width="0.78" height="1.05" fill="#000" opacity=".5"/><rect x="995.61" y="108.98" width="9.38" height="1.05" fill="#795e26" opacity=".5"/><rect x="1004.99" y="108.98" width="1.56" height="1.05" fill="#0431fa" opacity=".5"/><rect x="1006.55" y="108.98" width="0.78" height="1.05" fill="#000" opacity=".5"/><rect x="976.06" y="112.11" width="1.56" height="1.05" fill="#008000" opacity=".5"/><rect x="978.40" y="112.11" width="3.91" height="1.05" fill="#008000" opacity=".5"/><rect x="983.09" y="112.11" width="1.56" height="1.05" fill="#008000" opacity=".5"/><rect x="985.44" y="112.11" width="2.35" height="1.05" fill="#008000" opacity=".5"/><rect x="988.57" y="112.11" width="7.04" height="1.05" fill="#008000" opacity=".5"/><rect x="996.39" y="112.11" width="1.56" height="1.05" fill="#008000" opacity=".5"/><rect x="998.73" y="112.11" width="2.35" height="1.05" fill="#008000" opacity=".5"/><rect x="1001.86" y="112.11" width="3.91" height="1.05" fill="#008000" opacity=".5"/><rect x="976.06" y="113.67" width="1.56" height="1.05" fill="#af00db" opacity=".5"/><rect x="978.40" y="113.67" width="0.78" height="1.05" fill="#0431fa" opacity=".5"/><rect x="979.18" y="113.67" width="7.04" height="1.05" fill="#0070c1" opacity=".5"/><rect x="986.22" y="113.67" width="0.78" height="1.05" fill="#000" opacity=".5"/><rect x="987.00" y="113.67" width="7.82" height="1.05" fill="#001080" opacity=".5"/><rect x="995.61" y="113.67" width="0.78" height="1.05" fill="#000" opacity=".5"/><rect x="997.17" y="113.67" width="0.78" height="1.05" fill="#098658" opacity=".5"/><rect x="997.95" y="113.67" width="0.78" height="1.05" fill="#0431fa" opacity=".5"/><rect x="999.52" y="113.67" width="0.78" height="1.05" fill="#0431fa" opacity=".5"/><rect x="979.18" y="115.24" width="3.91" height="1.05" fill="#0000ff" opacity=".5"/><rect x="983.88" y="115.24" width="3.91" height="1.05" fill="#0070c1" opacity=".5"/><rect x="988.57" y="115.24" width="0.78" height="1.05" fill="#000" opacity=".5"/><rect x="990.13" y="115.24" width="7.04" height="1.05" fill="#0070c1" opacity=".5"/><rect x="997.17" y="115.24" width="0.78" height="1.05" fill="#000" opacity=".5"/><rect x="997.95" y="115.24" width="7.82" height="1.05" fill="#795e26" opacity=".5"/><rect x="1005.77" y="115.24" width="0.78" height="1.05" fill="#319331" opacity=".5"/><rect x="1006.55" y="115.24" width="0.78" height="1.05" fill="#098658" opacity=".5"/><rect x="1007.34" y="115.24" width="0.78" height="1.05" fill="#319331" opacity=".5"/><rect x="1008.12" y="115.24" width="0.78" height="1.05" fill="#000" opacity=".5"/><rect x="979.18" y="116.80" width="3.91" height="1.05" fill="#0000ff" opacity=".5"/><rect x="983.88" y="116.80" width="10.17" height="1.05" fill="#0070c1" opacity=".5"/><rect x="994.82" y="116.80" width="0.78" height="1.05" fill="#000" opacity=".5"/><rect x="996.39" y="116.80" width="3.91" height="1.05" fill="#0070c1" opacity=".5"/><rect x="1000.30" y="116.80" width="0.78" height="1.05" fill="#000" opacity=".5"/><rect x="1001.08" y="116.80" width="10.17" height="1.05" fill="#795e26" opacity=".5"/><rect x="1011.25" y="116.80" width="1.56" height="1.05" fill="#319331" opacity=".5"/><rect x="1012.81" y="116.80" width="0.78" height="1.05" fill="#000" opacity=".5"/><rect x="1013.59" y="116.80" width="10.17" height="1.05" fill="#795e26" opacity=".5"/><rect x="1023.76" y="116.80" width="0.78" height="1.05" fill="#319331" opacity=".5"/><rect x="1024.54" y="116.80" width="3.91" height="1.05" fill="#a31515" opacity=".5"/><rect x="1028.45" y="116.80" width="0.78" height="1.05" fill="#319331" opacity=".5"/><rect x="1030.01" y="116.80" width="2.35" height="1.05" fill="#000" opacity=".5"/><rect x="1033.14" y="116.80" width="3.13" height="1.05" fill="#0000ff" opacity=".5"/><rect x="1036.27" y="116.80" width="0.78" height="1.05" fill="#000" opacity=".5"/><rect x="979.18" y="119.93" width="1.56" height="1.05" fill="#008000" opacity=".5"/><rect x="981.53" y="119.93" width="1.56" height="1.05" fill="#008000" opacity=".5"/><rect x="983.88" y="119.93" width="1.56" height="1.05" fill="#008000" opacity=".5"/><rect x="986.22" y="119.93" width="6.26" height="1.05" fill="#008000" opacity=".5"/><rect x="993.26" y="119.93" width="1.56" height="1.05" fill="#008000" opacity=".5"/><rect x="995.61" y="119.93" width="4.69" height="1.05" fill="#008000" opacity=".5"/><rect x="1001.08" y="119.93" width="1.56" height="1.05" fill="#008000" opacity=".5"/><rect x="1003.43" y="119.93" width="2.35" height="1.05" fill="#008000" opacity=".5"/><rect x="1006.55" y="119.93" width="4.69" height="1.05" fill="#008000" opacity=".5"/><rect x="1012.03" y="119.93" width="2.35" height="1.05" fill="#008000" opacity=".5"/><rect x="1015.16" y="119.93" width="3.13" height="1.05" fill="#008000" opacity=".5"/><rect x="1019.07" y="119.93" width="6.26" height="1.05" fill="#008000" opacity=".5"/><rect x="979.18" y="121.50" width="1.56" height="1.05" fill="#af00db" opacity=".5"/><rect x="981.53" y="121.50" width="0.78" height="1.05" fill="#319331" opacity=".5"/><rect x="982.31" y="121.50" width="10.17" height="1.05" fill="#0070c1" opacity=".5"/><rect x="992.48" y="121.50" width="0.78" height="1.05" fill="#319331" opacity=".5"/><rect x="994.04" y="121.50" width="0.78" height="1.05" fill="#319331" opacity=".5"/><rect x="982.31" y="123.06" width="4.69" height="1.05" fill="#af00db" opacity=".5"/><rect x="987.00" y="123.06" width="0.78" height="1.05" fill="#000" opacity=".5"/><rect x="988.57" y="123.06" width="1.56" height="1.05" fill="#008000" opacity=".5"/><rect x="990.91" y="123.06" width="3.91" height="1.05" fill="#008000" opacity=".5"/><rect x="995.61" y="123.06" width="5.47" height="1.05" fill="#008000" opacity=".5"/><rect x="1001.86" y="123.06" width="3.13" height="1.05" fill="#008000" opacity=".5"/><rect x="1005.77" y="123.06" width="6.26" height="1.05" fill="#008000" opacity=".5"/><rect x="1012.81" y="123.06" width="2.35" height="1.05" fill="#008000" opacity=".5"/><rect x="1015.94" y="123.06" width="4.69" height="1.05" fill="#008000" opacity=".5"/><rect x="979.18" y="124.62" width="0.78" height="1.05" fill="#319331" opacity=".5"/><rect x="979.18" y="127.75" width="1.56" height="1.05" fill="#008000" opacity=".5"/><rect x="981.53" y="127.75" width="5.47" height="1.05" fill="#008000" opacity=".5"/><rect x="987.79" y="127.75" width="2.35" height="1.05" fill="#008000" opacity=".5"/><rect x="990.91" y="127.75" width="5.47" height="1.05" fill="#008000" opacity=".5"/><rect x="997.17" y="127.75" width="3.13" height="1.05" fill="#008000" opacity=".5"/><rect x="1001.08" y="127.75" width="6.26" height="1.05" fill="#008000" opacity=".5"/><rect x="1008.12" y="127.75" width="2.35" height="1.05" fill="#008000" opacity=".5"/><rect x="1011.25" y="127.75" width="3.13" height="1.05" fill="#008000" opacity=".5"/><rect x="979.18" y="129.32" width="3.91" height="1.05" fill="#001080" opacity=".5"/><rect x="983.09" y="129.32" width="0.78" height="1.05" fill="#000" opacity=".5"/><rect x="983.88" y="129.32" width="10.95" height="1.05" fill="#795e26" opacity=".5"/><rect x="994.82" y="129.32" width="1.56" height="1.05" fill="#319331" opacity=".5"/><rect x="996.39" y="129.32" width="0.78" height="1.05" fill="#000" opacity=".5"/><rect x="979.18" y="132.45" width="1.56" height="1.05" fill="#008000" opacity=".5"/><rect x="981.53" y="132.45" width="2.35" height="1.05" fill="#008000" opacity=".5"/><rect x="984.66" y="132.45" width="2.35" height="1.05" fill="#008000" opacity=".5"/><rect x="987.79" y="132.45" width="6.26" height="1.05" fill="#008000" opacity=".5"/><rect x="994.82" y="132.45" width="3.13" height="1.05" fill="#008000" opacity=".5"/><rect x="979.18" y="134.01" width="3.91" height="1.05" fill="#0000ff" opacity=".5"/><rect x="983.88" y="134.01" width="9.38" height="1.05" fill="#0070c1" opacity=".5"/><rect x="994.04" y="134.01" width="0.78" height="1.05" fill="#000" opacity=".5"/><rect x="995.61" y="134.01" width="3.91" height="1.05" fill="#0070c1" opacity=".5"/><rect x="999.52" y="134.01" width="0.78" height="1.05" fill="#000" opacity=".5"/><rect x="1000.30" y="134.01" width="10.17" height="1.05" fill="#795e26" opacity=".5"/><rect x="1010.46" y="134.01" width="1.56" height="1.05" fill="#319331" opacity=".5"/><rect x="1012.03" y="134.01" width="0.78" height="1.05" fill="#000" opacity=".5"/><rect x="979.18" y="135.58" width="3.91" height="1.05" fill="#0000ff" opacity=".5"/><rect x="983.88" y="135.58" width="5.47" height="1.05" fill="#0070c1" opacity=".5"/><rect x="990.13" y="135.58" width="0.78" height="1.05" fill="#000" opacity=".5"/><rect x="991.70" y="135.58" width="6.26" height="1.05" fill="#001080" opacity=".5"/><rect x="997.95" y="135.58" width="0.78" height="1.05" fill="#000" opacity=".5"/><rect x="998.73" y="135.58" width="10.17" height="1.05" fill="#795e26" opacity=".5"/><rect x="1008.90" y="135.58" width="0.78" height="1.05" fill="#319331" opacity=".5"/><rect x="1009.68" y="135.58" width="3.91" height="1.05" fill="#a31515" opacity=".5"/><rect x="1013.59" y="135.58" width="0.78" height="1.05" fill="#319331" opacity=".5"/><rect x="1014.37" y="135.58" width="0.78" height="1.05" fill="#000" opacity=".5"/><rect x="979.18" y="137.14" width="5.47" height="1.05" fill="#0070c1" opacity=".5"/><rect x="984.66" y="137.14" width="0.78" height="1.05" fill="#000" opacity=".5"/><rect x="985.44" y="137.14" width="8.60" height="1.05" fill="#795e26" opacity=".5"/><rect x="994.04" y="137.14" width="0.78" height="1.05" fill="#319331" opacity=".5"/><rect x="994.82" y="137.14" width="9.38" height="1.05" fill="#0070c1" opacity=".5"/><rect x="1004.21" y="137.14" width="0.78" height="1.05" fill="#319331" opacity=".5"/><rect x="1004.99" y="137.14" width="0.78" height="1.05" fill="#000" opacity=".5"/><rect x="979.18" y="140.27" width="1.56" height="1.05" fill="#008000" opacity=".5"/><rect x="981.53" y="140.27" width="4.69" height="1.05" fill="#008000" opacity=".5"/><rect x="987.00" y="140.27" width="2.35" height="1.05" fill="#008000" opacity=".5"/><rect x="990.13" y="140.27" width="3.13" height="1.05" fill="#008000" opacity=".5"/><rect x="994.04" y="140.27" width="1.56" height="1.05" fill="#008000" opacity=".5"/><rect x="996.39" y="140.27" width="4.69" height="1.05" fill="#008000" opacity=".5"/><rect x="1001.86" y="140.27" width="4.69" height="1.05" fill="#008000" opacity=".5"/><rect x="1007.34" y="140.27" width="5.47" height="1.05" fill="#008000" opacity=".5"/><rect x="1013.59" y="140.27" width="5.47" height="1.05" fill="#008000" opacity=".5"/><rect x="1019.85" y="140.27" width="2.35" height="1.05" fill="#008000" opacity=".5"/><rect x="1022.98" y="140.27" width="11.73" height="1.05" fill="#008000" opacity=".5"/><rect x="979.18" y="141.83" width="3.91" height="1.05" fill="#0000ff" opacity=".5"/><rect x="983.88" y="141.83" width="9.38" height="1.05" fill="#0070c1" opacity=".5"/><rect x="994.04" y="141.83" width="0.78" height="1.05" fill="#000" opacity=".5"/><rect x="995.61" y="141.83" width="25.81" height="1.05" fill="#795e26" opacity=".5"/><rect x="1021.41" y="141.83" width="0.78" height="1.05" fill="#319331" opacity=".5"/><rect x="1022.19" y="141.83" width="5.47" height="1.05" fill="#0070c1" opacity=".5"/><rect x="1027.67" y="141.83" width="0.78" height="1.05" fill="#000" opacity=".5"/><rect x="1028.45" y="141.83" width="7.04" height="1.05" fill="#001080" opacity=".5"/><rect x="1035.49" y="141.83" width="0.78" height="1.05" fill="#319331" opacity=".5"/><rect x="1036.27" y="141.83" width="0.78" height="1.05" fill="#000" opacity=".5"/><rect x="979.18" y="144.96" width="1.56" height="1.05" fill="#008000" opacity=".5"/><rect x="981.53" y="144.96" width="2.35" height="1.05" fill="#008000" opacity=".5"/><rect x="984.66" y="144.96" width="2.35" height="1.05" fill="#008000" opacity=".5"/><rect x="987.79" y="144.96" width="7.04" height="1.05" fill="#008000" opacity=".5"/><rect x="995.61" y="144.96" width="2.35" height="1.05" fill="#008000" opacity=".5"/><rect x="998.73" y="144.96" width="1.56" height="1.05" fill="#008000" opacity=".5"/><rect x="1001.08" y="144.96" width="3.13" height="1.05" fill="#008000" opacity=".5"/><rect x="1004.99" y="144.96" width="2.35" height="1.05" fill="#008000" opacity=".5"/><rect x="1008.12" y="144.96" width="6.26" height="1.05" fill="#008000" opacity=".5"/><rect x="1015.16" y="144.96" width="3.13" height="1.05" fill="#008000" opacity=".5"/><rect x="979.18" y="146.53" width="11.73" height="1.05" fill="#795e26" opacity=".5"/><rect x="990.91" y="146.53" width="0.78" height="1.05" fill="#319331" opacity=".5"/><rect x="991.70" y="146.53" width="9.38" height="1.05" fill="#0070c1" opacity=".5"/><rect x="1001.08" y="146.53" width="0.78" height="1.05" fill="#319331" opacity=".5"/><rect x="1001.86" y="146.53" width="0.78" height="1.05" fill="#000" opacity=".5"/><rect x="976.06" y="148.09" width="0.78" height="1.05" fill="#0431fa" opacity=".5"/><rect x="972.93" y="149.65" width="0.78" height="1.05" fill="#7b3814" opacity=".5"/><rect x="969.80" y="151.22" width="0.78" height="1.05" fill="#319331" opacity=".5"/><rect x="970.58" y="151.22" width="0.78" height="1.05" fill="#0431fa" opacity=".5"/><rect x="971.36" y="151.22" width="0.78" height="1.05" fill="#000" opacity=".5"/><rect x="969.80" y="154.35" width="1.56" height="1.05" fill="#008000" opacity=".5"/><rect x="972.15" y="154.35" width="6.26" height="1.05" fill="#008000" opacity=".5"/><rect x="979.18" y="154.35" width="1.56" height="1.05" fill="#008000" opacity=".5"/><rect x="981.53" y="154.35" width="2.35" height="1.05" fill="#008000" opacity=".5"/><rect x="984.66" y="154.35" width="4.69" height="1.05" fill="#008000" opacity=".5"/><rect x="990.13" y="154.35" width="5.47" height="1.05" fill="#008000" opacity=".5"/><rect x="996.39" y="154.35" width="5.47" height="1.05" fill="#008000" opacity=".5"/><rect x="1002.64" y="154.35" width="2.35" height="1.05" fill="#008000" opacity=".5"/><rect x="1005.77" y="154.35" width="11.73" height="1.05" fill="#008000" opacity=".5"/><rect x="969.80" y="155.91" width="6.26" height="1.05" fill="#0000ff" opacity=".5"/><rect x="976.84" y="155.91" width="25.81" height="1.05" fill="#795e26" opacity=".5"/><rect x="1002.64" y="155.91" width="0.78" height="1.05" fill="#0431fa" opacity=".5"/><rect x="1003.43" y="155.91" width="3.13" height="1.05" fill="#001080" opacity=".5"/><rect x="1006.55" y="155.91" width="0.78" height="1.05" fill="#0431fa" opacity=".5"/><rect x="1008.12" y="155.91" width="0.78" height="1.05" fill="#0431fa" opacity=".5"/><rect x="972.93" y="157.48" width="4.69" height="1.05" fill="#af00db" opacity=".5"/><rect x="978.40" y="157.48" width="3.13" height="1.05" fill="#001080" opacity=".5"/><rect x="976.06" y="159.04" width="0.78" height="1.05" fill="#000" opacity=".5"/><rect x="976.84" y="159.04" width="5.47" height="1.05" fill="#795e26" opacity=".5"/><rect x="982.31" y="159.04" width="0.78" height="1.05" fill="#319331" opacity=".5"/><rect x="983.09" y="159.04" width="0.78" height="1.05" fill="#811f3f" opacity=".5"/><rect x="983.88" y="159.04" width="0.78" height="1.05" fill="#d16969" opacity=".5"/><rect x="984.66" y="159.04" width="0.78" height="1.05" fill="#d16969" opacity=".5"/><rect x="985.44" y="159.04" width="4.69" height="1.05" fill="#0000ff" opacity=".5"/><rect x="990.13" y="159.04" width="0.78" height="1.05" fill="#811f3f" opacity=".5"/><rect x="990.91" y="159.04" width="4.69" height="1.05" fill="#0000ff" opacity=".5"/><rect x="995.61" y="159.04" width="0.78" height="1.05" fill="#d16969" opacity=".5"/><rect x="996.39" y="159.04" width="0.78" height="1.05" fill="#d16969" opacity=".5"/><rect x="997.17" y="159.04" width="0.78" height="1.05" fill="#d16969" opacity=".5"/><rect x="997.95" y="159.04" width="0.78" height="1.05" fill="#d16969" opacity=".5"/><rect x="998.73" y="159.04" width="4.69" height="1.05" fill="#811f3f" opacity=".5"/><rect x="1003.43" y="159.04" width="0.78" height="1.05" fill="#d16969" opacity=".5"/><rect x="1004.21" y="159.04" width="0.78" height="1.05" fill="#d16969" opacity=".5"/><rect x="1004.99" y="159.04" width="0.78" height="1.05" fill="#811f3f" opacity=".5"/><rect x="1005.77" y="159.04" width="0.78" height="1.05" fill="#0000ff" opacity=".5"/><rect x="1006.55" y="159.04" width="0.78" height="1.05" fill="#000" opacity=".5"/><rect x="1008.12" y="159.04" width="2.35" height="1.05" fill="#a31515" opacity=".5"/><rect x="1011.25" y="159.04" width="2.35" height="1.05" fill="#a31515" opacity=".5"/><rect x="1013.59" y="159.04" width="0.78" height="1.05" fill="#319331" opacity=".5"/><rect x="1015.94" y="159.04" width="1.56" height="1.05" fill="#008000" opacity=".5"/><rect x="1018.28" y="159.04" width="5.47" height="1.05" fill="#008000" opacity=".5"/><rect x="1024.54" y="159.04" width="1.56" height="1.05" fill="#008000" opacity=".5"/><rect x="1026.89" y="159.04" width="5.47" height="1.05" fill="#008000" opacity=".5"/><rect x="976.06" y="160.61" width="0.78" height="1.05" fill="#000" opacity=".5"/><rect x="976.84" y="160.61" width="5.47" height="1.05" fill="#795e26" opacity=".5"/><rect x="982.31" y="160.61" width="0.78" height="1.05" fill="#319331" opacity=".5"/><rect x="983.09" y="160.61" width="0.78" height="1.05" fill="#811f3f" opacity=".5"/><rect x="983.88" y="160.61" width="0.78" height="1.05" fill="#d16969" opacity=".5"/><rect x="984.66" y="160.61" width="0.78" height="1.05" fill="#d16969" opacity=".5"/><rect x="985.44" y="160.61" width="4.69" height="1.05" fill="#0000ff" opacity=".5"/><rect x="990.13" y="160.61" width="0.78" height="1.05" fill="#811f3f" opacity=".5"/><rect x="990.91" y="160.61" width="4.69" height="1.05" fill="#0000ff" opacity=".5"/><rect x="995.61" y="160.61" width="0.78" height="1.05" fill="#d16969" opacity=".5"/><rect x="996.39" y="160.61" width="0.78" height="1.05" fill="#d16969" opacity=".5"/><rect x="997.17" y="160.61" width="0.78" height="1.05" fill="#d16969" opacity=".5"/><rect x="997.95" y="160.61" width="0.78" height="1.05" fill="#d16969" opacity=".5"/><rect x="998.73" y="160.61" width="2.35" height="1.05" fill="#811f3f" opacity=".5"/><rect x="1001.08" y="160.61" width="0.78" height="1.05" fill="#d16969" opacity=".5"/><rect x="1001.86" y="160.61" width="0.78" height="1.05" fill="#d16969" opacity=".5"/><rect x="1002.64" y="160.61" width="0.78" height="1.05" fill="#811f3f" opacity=".5"/><rect x="1003.43" y="160.61" width="0.78" height="1.05" fill="#0000ff" opacity=".5"/><rect x="1004.21" y="160.61" width="0.78" height="1.05" fill="#000" opacity=".5"/><rect x="1005.77" y="160.61" width="2.35" height="1.05" fill="#a31515" opacity=".5"/><rect x="1008.90" y="160.61" width="2.35" height="1.05" fill="#a31515" opacity=".5"/><rect x="1011.25" y="160.61" width="0.78" height="1.05" fill="#319331" opacity=".5"/><rect x="1016.72" y="160.61" width="1.56" height="1.05" fill="#008000" opacity=".5"/><rect x="1019.07" y="160.61" width="5.47" height="1.05" fill="#008000" opacity=".5"/><rect x="1025.32" y="160.61" width="1.56" height="1.05" fill="#008000" opacity=".5"/><rect x="1027.67" y="160.61" width="4.69" height="1.05" fill="#008000" opacity=".5"/><rect x="976.06" y="162.17" width="0.78" height="1.05" fill="#000" opacity=".5"/><rect x="976.84" y="162.17" width="5.47" height="1.05" fill="#795e26" opacity=".5"/><rect x="982.31" y="162.17" width="0.78" height="1.05" fill="#319331" opacity=".5"/><rect x="983.09" y="162.17" width="0.78" height="1.05" fill="#811f3f" opacity=".5"/><rect x="983.88" y="162.17" width="0.78" height="1.05" fill="#d16969" opacity=".5"/><rect x="984.66" y="162.17" width="0.78" height="1.05" fill="#d16969" opacity=".5"/><rect x="985.44" y="162.17" width="4.69" height="1.05" fill="#811f3f" opacity=".5"/><rect x="990.13" y="162.17" width="0.78" height="1.05" fill="#d16969" opacity=".5"/><rect x="990.91" y="162.17" width="0.78" height="1.05" fill="#d16969" opacity=".5"/><rect x="991.70" y="162.17" width="0.78" height="1.05" fill="#d16969" opacity=".5"/><rect x="992.48" y="162.17" width="0.78" height="1.05" fill="#d16969" opacity=".5"/><rect x="993.26" y="162.17" width="4.69" height="1.05" fill="#0000ff" opacity=".5"/><rect x="997.95" y="162.17" width="0.78" height="1.05" fill="#811f3f" opacity=".5"/><rect x="998.73" y="162.17" width="4.69" height="1.05" fill="#0000ff" opacity=".5"/><rect x="1003.43" y="162.17" width="0.78" height="1.05" fill="#d16969" opacity=".5"/><rect x="1004.21" y="162.17" width="0.78" height="1.05" fill="#d16969" opacity=".5"/><rect x="1004.99" y="162.17" width="0.78" height="1.05" fill="#811f3f" opacity=".5"/><rect x="1005.77" y="162.17" width="0.78" height="1.05" fill="#0000ff" opacity=".5"/><rect x="1006.55" y="162.17" width="0.78" height="1.05" fill="#000" opacity=".5"/><rect x="1008.12" y="162.17" width="2.35" height="1.05" fill="#a31515" opacity=".5"/><rect x="1011.25" y="162.17" width="2.35" height="1.05" fill="#a31515" opacity=".5"/><rect x="1013.59" y="162.17" width="0.78" height="1.05" fill="#319331" opacity=".5"/><rect x="1015.94" y="162.17" width="1.56" height="1.05" fill="#008000" opacity=".5"/><rect x="1018.28" y="162.17" width="5.47" height="1.05" fill="#008000" opacity=".5"/><rect x="1024.54" y="162.17" width="1.56" height="1.05" fill="#008000" opacity=".5"/><rect x="1026.89" y="162.17" width="5.47" height="1.05" fill="#008000" opacity=".5"/><rect x="976.06" y="163.73" width="0.78" height="1.05" fill="#000" opacity=".5"/><rect x="976.84" y="163.73" width="5.47" height="1.05" fill="#795e26" opacity=".5"/><rect x="982.31" y="163.73" width="0.78" height="1.05" fill="#319331" opacity=".5"/><rect x="983.09" y="163.73" width="0.78" height="1.05" fill="#811f3f" opacity=".5"/><rect x="983.88" y="163.73" width="0.78" height="1.05" fill="#d16969" opacity=".5"/><rect x="984.66" y="163.73" width="0.78" height="1.05" fill="#d16969" opacity=".5"/><rect x="985.44" y="163.73" width="2.35" height="1.05" fill="#811f3f" opacity=".5"/><rect x="987.79" y="163.73" width="0.78" height="1.05" fill="#d16969" opacity=".5"/><rect x="988.57" y="163.73" width="0.78" height="1.05" fill="#d16969" opacity=".5"/><rect x="989.35" y="163.73" width="0.78" height="1.05" fill="#d16969" opacity=".5"/><rect x="990.13" y="163.73" width="0.78" height="1.05" fill="#d16969" opacity=".5"/><rect x="990.91" y="163.73" width="4.69" height="1.05" fill="#0000ff" opacity=".5"/><rect x="995.61" y="163.73" width="0.78" height="1.05" fill="#811f3f" opacity=".5"/><rect x="996.39" y="163.73" width="4.69" height="1.05" fill="#0000ff" opacity=".5"/><rect x="1001.08" y="163.73" width="0.78" height="1.05" fill="#d16969" opacity=".5"/><rect x="1001.86" y="163.73" width="0.78" height="1.05" fill="#d16969" opacity=".5"/><rect x="1002.64" y="163.73" width="0.78" height="1.05" fill="#811f3f" opacity=".5"/><rect x="1003.43" y="163.73" width="0.78" height="1.05" fill="#0000ff" opacity=".5"/><rect x="1004.21" y="163.73" width="0.78" height="1.05" fill="#000" opacity=".5"/><rect x="1005.77" y="163.73" width="2.35" height="1.05" fill="#a31515" opacity=".5"/><rect x="1008.90" y="163.73" width="2.35" height="1.05" fill="#a31515" opacity=".5"/><rect x="1011.25" y="163.73" width="0.78" height="1.05" fill="#319331" opacity=".5"/><rect x="1012.03" y="163.73" width="0.78" height="1.05" fill="#000" opacity=".5"/><rect x="1016.72" y="163.73" width="1.56" height="1.05" fill="#008000" opacity=".5"/><rect x="1019.07" y="163.73" width="4.69" height="1.05" fill="#008000" opacity=".5"/><rect x="1024.54" y="163.73" width="1.56" height="1.05" fill="#008000" opacity=".5"/><rect x="1026.89" y="163.73" width="5.47" height="1.05" fill="#008000" opacity=".5"/><rect x="969.80" y="165.30" width="0.78" height="1.05" fill="#0431fa" opacity=".5"/><rect x="972.15" y="107.07" width="32.06" height="1.7" fill="#b5daff" opacity=".9"/></svg>
<div style="left:1057.1px;top:84px;width:.8px;height:690px;background:#e6e6e6"></div>
<div style="left:1057.1px;top:84px;width:11px;height:.8px;background:#e6e6e6"></div>
<div style="left:1057.6px;top:138.1px;width:10.4px;height:322.2px;background:#c1c1c1"></div>
<div style="left:1057.6px;top:186.8px;width:10.4px;height:1.6px;background:#4a4a4a"></div>
<div style="left:1067.1px;top:12px;width:1.4px;height:762px;background:linear-gradient(#8b8ea8,#858590 20%,#808080)"></div>
<div style="left:12px;top:773.8px;width:1057px;height:18px;background:#68217a"></div>
<div style="left:12px;top:773.8px;width:26.1px;height:18px;background:#16825d"></div>
<div style="left:38.1px;top:773.8px;width:66.6px;height:18px;background:#39103f"></div>
<svg style="left:0;top:770px" width="40" height="24" viewBox="0 770 40 24" fill="none" stroke="#fff" stroke-width="1" stroke-linecap="round" stroke-linejoin="round"><path d="M21.7 780.4L24.9 783.7L21.7 787"/><path d="M29 778.2L25.8 781.4L29 784.6"/></svg>
<svg style="left:46.7px;top:777.6px" width="9.8" height="10.2" viewBox="0 0 10 11" fill="none" stroke="#fff" stroke-width=".9" stroke-linejoin="round"><path d="M5 .7C6.2 1.6 7.6 2 9.2 2V5.2C9.2 7.8 7.4 9.6 5 10.4C2.6 9.6 .8 7.8 .8 5.2V2C2.4 2 3.8 1.6 5 .7Z"/><path d="M5 3.6V7.4" stroke-width="1.5"/></svg>
<span class="t" id="s1" style="left:59.60px;top:774.60px;height:16px;line-height:16px;font-size:9.40px;color:#ffffff;letter-spacing:-0.029px;">受限模式</span>
<svg style="left:111.6px;top:777.3px" width="10.6" height="10.6" viewBox="0 0 10.6 10.6" fill="none" stroke="#fff" stroke-width=".85" stroke-linecap="round"><circle cx="5.3" cy="5.3" r="4.5"/><path d="M3.4 3.4L7.2 7.2M7.2 3.4L3.4 7.2"/></svg>
<span class="t" id="s2" style="left:124.60px;top:775.50px;height:16px;line-height:16px;font-size:10.30px;color:#ffffff;">0</span>
<svg style="left:132.8px;top:777.2px" width="10.6" height="10.6" viewBox="0 0 10.6 10.6" fill="none" stroke="#fff" stroke-width=".85" stroke-linecap="round" stroke-linejoin="round"><path d="M5.3 1L9.9 9.6H.7Z"/><path d="M5.3 4.2V6.6M5.3 8V8.1"/></svg>
<span class="t" id="s3" style="left:145.90px;top:775.50px;height:16px;line-height:16px;font-size:10.30px;color:#ffffff;">0</span>
<svg style="left:164.2px;top:777px" width="10" height="11" viewBox="0 0 10 11" fill="none" stroke="#fff" stroke-width=".85" stroke-linecap="round" stroke-linejoin="round"><path d="M5 3.4L2.6 10.2M5 3.4L7.4 10.2M3.5 7.6H6.5"/><circle cx="5" cy="3" r=".7" fill="#fff"/><path d="M2.8 1.2C1.9 2.2 1.9 3.9 2.8 4.9M7.2 1.2C8.1 2.2 8.1 3.9 7.2 4.9M1.4 .4C0 2 0 4.4 1.4 5.9M8.6 .4C10 2 10 4.4 8.6 5.9"/></svg>
<span class="t" id="s4" style="left:177.00px;top:775.50px;height:16px;line-height:16px;font-size:10.30px;color:#ffffff;">0</span>
<span class="t" id="s5" style="left:755.70px;top:774.60px;height:16px;line-height:16px;font-size:9.70px;color:#ffffff;letter-spacing:-0.246px;">行 16，列 45 (已选择41)</span>
<span class="t" id="s6" style="left:868.50px;top:774.60px;height:16px;line-height:16px;font-size:9.70px;color:#ffffff;letter-spacing:-0.371px;">空格: 4</span>
<span class="t" id="s7" style="left:909.40px;top:774.60px;height:16px;line-height:16px;font-size:9.70px;color:#ffffff;letter-spacing:-0.451px;">UTF-8</span>
<span class="t" id="s8" style="left:946.50px;top:774.60px;height:16px;line-height:16px;font-size:9.60px;color:#ffffff;letter-spacing:-1.116px;">CRLF</span>
<span class="t" id="s9" style="left:979.30px;top:774.60px;height:16px;line-height:16px;font-size:9.00px;color:#ffffff;letter-spacing:1.292px;">{}</span>
<span class="t" id="s10" style="left:994.00px;top:774.60px;height:16px;line-height:16px;font-size:9.70px;color:#ffffff;letter-spacing:-0.393px;">JavaScript</span>
<svg style="left:1045.9px;top:777.0px" width="10.8" height="11.9" viewBox="0 0 10 11" fill="none" stroke="#fff" stroke-width=".85" stroke-linejoin="round" stroke-linecap="round"><path d="M1.2 7.8C2.1 7 2.1 6 2.1 4.4C2.1 2.6 3.3 1.2 5 1.2C6.7 1.2 7.9 2.6 7.9 4.4C7.9 6 7.9 7 8.8 7.8Z"/><path d="M4 9.4C4.3 9.9 5.7 9.9 6 9.4"/></svg>
</div></div>
</body></html>
